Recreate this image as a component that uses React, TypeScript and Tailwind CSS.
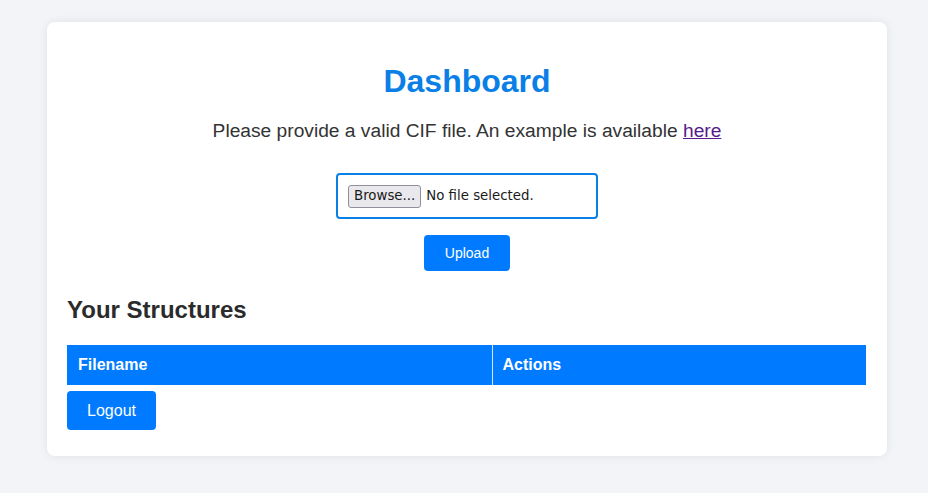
export default function App() {
  return (
    <div className="min-h-[493px] bg-[#f3f4f8] pt-[22px] font-['Liberation_Sans',Arial,sans-serif]">
      <div className="ml-[47px] w-[840px] rounded-lg bg-white px-5 pt-[41px] pb-[26px] shadow-[0_0_10px_rgba(0,0,0,0.08)]">
        <h1 className="text-center text-[32px] font-bold leading-[37px] text-[#0a7fe6]">Dashboard</h1>
        <p className="mt-[20px] text-center text-[19.2px] leading-[22px] text-[#333]">
          Please provide a valid CIF file. An example is available{' '}
          <a href="#" className="text-[#551a8b] underline">here</a>
        </p>
        <div className="mt-[31px] flex flex-col items-center">
          <div className="flex h-[46px] w-[262px] items-center rounded-[4px] border-2 border-[#0a7fe6] px-[10px] font-['DejaVu_Sans',sans-serif] text-[13.33px] text-[#1a1a1a]">
            <span className="flex h-[23px] items-center rounded-[3px] border border-[#8f8f9d] bg-[#e9e9ed] px-[5px] leading-none">Browse...</span>
            <span className="ml-[5px]">No file selected.</span>
          </div>
          <button className="mt-4 h-[36px] w-[86px] rounded-[4px] bg-[#007bff] text-[14px] text-white">Upload</button>
        </div>
        <h2 className="mt-[25px] text-[24px] font-bold leading-[28px] text-[#2b2b2b]">Your Structures</h2>
        <table className="mt-[21px] w-[799px] border-collapse">
          <thead>
            <tr className="h-[40px] bg-[#007bff] text-left text-[16px] font-bold text-white">
              <th className="w-[425px] border-r border-[#d6e6f7] px-[11px]">Filename</th>
              <th className="px-[10px]">Actions</th>
            </tr>
          </thead>
        </table>
        <button className="mt-[6px] h-[39px] w-[89px] rounded-[4px] bg-[#007bff] text-[16px] text-white">Logout</button>
      </div>
    </div>
  );
}
